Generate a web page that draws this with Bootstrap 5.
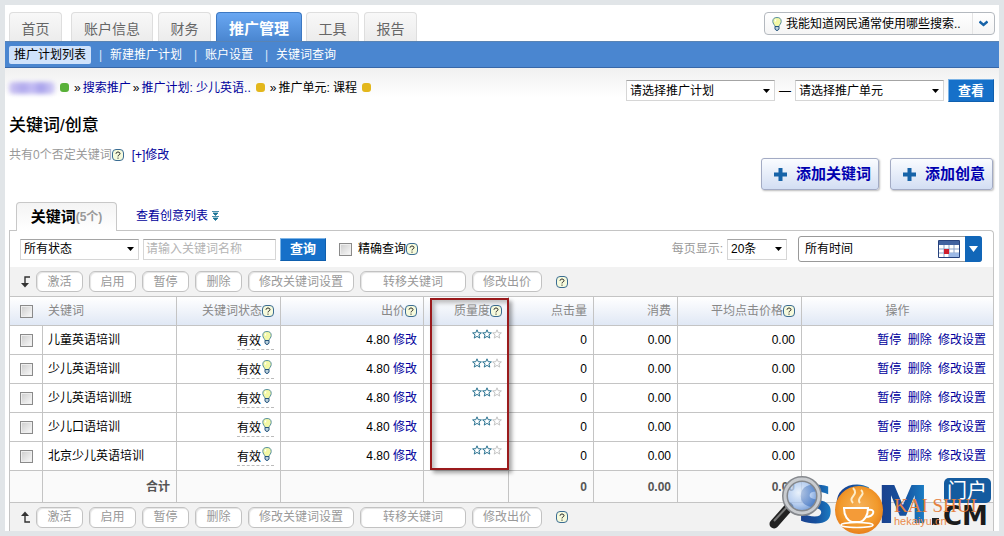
<!DOCTYPE html>
<html lang="zh-CN">
<head>
<meta charset="utf-8">
<meta name="viewport" content="width=device-width, initial-scale=1">
<title>关键词/创意 - 推广管理</title>
<link href="https://cdn.jsdelivr.net/npm/bootstrap@5.3.0/dist/css/bootstrap.min.css" rel="stylesheet">
<style>
  body { background: #e1e5e8; padding: 5px; font: 12px/18px "Liberation Sans", "Noto Sans CJK SC", sans-serif; color: #000; }
  a { color: #00009c; text-decoration: none; }
  svg { display: block; flex: none; }
  .page-shell { background: #fff; position: relative; }

  .main-tabs { height: 36px; padding: 0 4px; }
  .main-tabs .tab-link { height: 29px; width: 53px; margin-right: 5px; border: 1px solid #dedede; border-bottom: 0; border-radius: 4px 4px 0 0; background: linear-gradient(#f8f8f8, #ececec); color: #666; font-size: 14px; display: flex; align-items: center; justify-content: center; padding-top: 3px; }
  .main-tabs .tab-link.first { margin-right: 9px; }
  .main-tabs .tab-link.wide { width: 82px; }
  .main-tabs .tab-link.active { width: 86px; margin-right: 4px; background: linear-gradient(#69a7f2, #4a86d0); border-color: #3c78c2; color: #fff; font-weight: bold; font-size: 15px; }
  .tip-box { height: 23px; width: 231px; margin-bottom: 6px; border: 1px solid #b4b9bf; border-radius: 4px; background: linear-gradient(#fff, #f5f5f5); color: #000; padding: 0 0 0 7px; }
  .tip-box .tip-arrow { width: 22px; height: 21px; border-left: 1px solid #e4e4e4; }

  .sub-nav { height: 27px; background: #4a86d0; border-top: 1px solid #5a84b4; border-bottom: 1px solid #3767a8; padding: 0 4px; }
  .sub-nav a { color: #fff; }
  .sub-nav .current { background: #cfe2fb; color: #000; border-radius: 2px; padding: 0 5px; }
  .sub-nav .bar { color: #dbe8f8; width: 19px; text-align: center; }

  .crumb-row { background: linear-gradient(#f0f0f0, #fff 30px); min-height: 46px; padding: 11px 5px 0 4px; }
  .crumbs { gap: 2px; }
  .masked { width: 46px; height: 12px; border-radius: 4px; background: linear-gradient(90deg, #c4baf0, #9f96ea 30%, #b7aef2 50%, #948ce8 70%, #cfc8f5); filter: blur(2px); opacity: .8; }
  .dot { width: 9px; height: 9px; border-radius: 3px; background: #e3b71c; margin: 0 3px 2px; }
  .dot.green { background: #58b038; }

  .pick { height: 21px; border: 1px solid #d6d6d6; border-top-color: #a4a4a4; border-radius: 0; color: #000; appearance: none; font-size: 12px; line-height: 18px; padding: 0 16px 0 3px; background: #fff url("data:image/svg+xml,%3Csvg xmlns='http://www.w3.org/2000/svg' width='7' height='4'%3E%3Cpath d='M0 0h7L3.5 4z'/%3E%3C/svg%3E") no-repeat right 4px center; }
  .pick-plan { width: 149px; }
  .pick-state { width: 119px; }
  .pick-count { width: 60px; }
  .blue-btn { height: 23px; width: 46px; border: 1px solid #0f5fae; border-top-color: #7db4e6; border-left-color: #7db4e6; border-radius: 0; background: #1670c9; color: #fff; font-size: 13px; font-weight: bold; line-height: 18px; padding: 0; }

  .page-title { font-size: 17px; line-height: 24px; font-weight: 500; margin: 0; padding-left: 4px; }
  .muted-text { color: #999; }
  .add-row { padding: 12px 6px 0 0; gap: 11px; }
  .add-btn { height: 32px; border: 1px solid #a3abc4; border-radius: 3px; background: linear-gradient(#fafcff, #d3def3); color: #0000b0; font-size: 15px; font-weight: bold; line-height: 20px; padding: 0 7px 0 11px; box-shadow: 1px 1px 2px #bbb; gap: 8px; }

  .list-tabs { padding: 12px 0 0 11px; gap: 19px; }
  .list-tab { width: 101px; height: 29px; border: 1px solid #c8c8c8; border-bottom: 0; border-radius: 4px 4px 0 0; background: linear-gradient(#f4f4f4, #fff); font-size: 15px; font-weight: bold; margin-bottom: -1px; position: relative; z-index: 1; color: #000; }
  .list-tab small { font-size: 12px; color: #999; }
  .panel { border: 1px solid #c4c4c4; border-bottom: 0; border-radius: 0 4px 0 0; margin: 0 5px 0 4px; position: relative; }
  .filter-bar { height: 36px; padding: 0 11px 0 10px; }
  .name-box { width: 133px; height: 21px; border: 1px solid #d6d6d6; border-top-color: #a4a4a4; padding: 0 2px; border-radius: 0; }
  .name-box::placeholder { color: #b4b4b4; opacity: 1; }
  .tick { appearance: none; width: 13px; height: 13px; margin: 0; border: 1px solid #8a8a8a; background: linear-gradient(135deg, #ccc, #fafafa); box-shadow: inset 0 0 0 1px #eee; display: block; flex: none; }
  .exact { margin: 0 6px 0 13px; }
  .date-box { width: 184px; height: 26px; border: 1px solid #999; border-radius: 3px; background: #fff; padding: 0 0 0 6px; color: #000; margin-left: 11px; }
  .date-box .drop { width: 17px; height: 26px; background: #1166b8; border-radius: 0 3px 3px 0; margin: -1px -1px -1px 5px; }

  .action-bar { background: #f2f2f2; height: 28px; padding: 0 11px; gap: 6px; color: #999; }
  .action-bar.top { height: 30px; border-bottom: 1px solid #c4c4c4; }
  .act { height: 21px; width: 47px; border: 1px solid #c2c2c2; border-radius: 6px; background: #fff; color: #999; padding: 0; line-height: 18px; box-shadow: inset 1px 1px 1px #e4e4e4; }
  .act.mid { width: 70px; }
  .act.long { width: 106px; }

  .kw-table { table-layout: fixed; width: 100%; border-collapse: separate; border-spacing: 0; }
  .kw-table th, .kw-table td { height: 29px; padding: 0 6px; border-right: 1px solid #c4c4c4; border-bottom: 1px solid #c4c4c4; text-align: right; vertical-align: middle; line-height: 18px; white-space: nowrap; }
  .kw-table th:last-child, .kw-table td:last-child { border-right: 0; }
  .kw-table thead th { background: linear-gradient(#fff, #f3f6fb 40%, #e0e8f5); color: #888; font-weight: normal; }
  .kw-table thead th:first-child { border-right: 0; }
  .kw-table .c-name { text-align: left; padding-left: 5px; }
  .kw-table tbody th { font-weight: normal; }
  .kw-table .c-tick { padding-left: 10px; }
  .kw-table tbody .c-star { vertical-align: top; padding-top: 3px; }
  .kw-table tfoot th, .kw-table tfoot td { height: 32px; background: #fafafa; color: #555; font-weight: bold; }
  .kw-table .c-ops a { margin-left: 3px; }
  .kw-table .c-ops { padding-right: 7px; }
  .w-tick { width: 33px; } .w-name { width: 134px; } .w-state { width: 104px; } .w-price { width: 143px; } .w-num { width: 85px; } .w-cost { width: 84px; } .w-avg { width: 124px; }
  .state { display: inline-flex; border-bottom: 1px dashed #bbb; line-height: 16px; padding-right: 1px; }
  .state span { padding-top: 2px; }
  .callout-frame { position: absolute; left: 6px; right: -1px; top: 1px; height: 172px; border: 2px solid #9a1a1c; box-shadow: 3px 3px 4px rgba(0,0,0,.35), inset 3px 3px 4px rgba(0,0,0,.25); pointer-events: none; z-index: 2; }
  .watermark { position: absolute; right: 5px; bottom: -3px; pointer-events: none; z-index: 3; }
</style>
</head>
<body>
<svg width="0" height="0" class="position-absolute" aria-hidden="true">
  <defs>
    <symbol id="i-help" viewBox="0 0 12 12"><rect x=".5" y=".5" width="11" height="11" rx="3.500" fill="#f6fadc" stroke="#3a6c92"/><path d="M4 4.700C4 2.500 8 2.500 8 4.600 8 6 6 5.800 6 7.400M6 8.600v1.100" fill="none" stroke="#222"/></symbol>
    <symbol id="i-bulb" viewBox="0 0 10 14"><path d="M3 9.500C2.800 7.600.8 6.900.8 4.400a4.200 3.900 0 0 1 8.400 0C9.200 6.900 7.200 7.600 7 9.500z" fill="#f3f8a6" stroke="#57909c"/><path d="M3 9.500h4v2.500L6 13.300H4L3 12z" fill="#bcd3de" stroke="#24537c"/><path d="M3 4.500l1-2" stroke="#fff" stroke-width="1.300"/></symbol>
    <symbol id="i-star" viewBox="0 0 10 10"><path d="M5 .8l1.200 2.900 3.200.2-2.500 2 .9 3.200L5 7.400 2.200 9.100l.9-3.200-2.500-2 3.200-.2z" fill="#fff" stroke="currentColor"/></symbol>
    <symbol id="i-plus" viewBox="0 0 15 15"><path d="M5.500 1h4v4.500H14v4H9.500V14h-4V9.500H1v-4h4.500z" fill="#1763a8"/></symbol>
    <symbol id="i-stars" viewBox="0 0 30 10"><use href="#i-star" width="10" height="10" color="#2b7391"/><use href="#i-star" x="10" width="10" height="10" color="#2b7391"/><use href="#i-star" x="20" width="10" height="10" color="#c4c4c4"/></symbol>
  </defs>
</svg>

<div class="page-shell">
  <header>
    <div class="main-tabs d-flex align-items-end">
      <nav class="d-flex align-items-end" aria-label="主导航">
        <a class="tab-link first" href="#">首页</a>
        <a class="tab-link wide" href="#">账户信息</a>
        <a class="tab-link" href="#">财务</a>
        <a class="tab-link active" href="#">推广管理</a>
        <a class="tab-link" href="#">工具</a>
        <a class="tab-link" href="#">报告</a>
      </nav>
      <button type="button" class="tip-box ms-auto d-flex align-items-center">
        <svg width="10" height="14"><use href="#i-bulb"/></svg>
        <span class="ms-1 flex-grow-1 text-start">我能知道网民通常使用哪些搜索..</span>
        <span class="tip-arrow d-flex align-items-center justify-content-center"><svg width="9" height="7" viewBox="0 0 9 7"><path d="M.5 1.500l4 3.500 4-3.500" fill="none" stroke="#1763a8" stroke-width="2.400"/></svg></span>
      </button>
    </div>
    <nav class="sub-nav d-flex align-items-center" aria-label="推广管理">
      <a class="current" href="#">推广计划列表</a><span class="bar">|</span>
      <a href="#">新建推广计划</a><span class="bar ms-1">|</span>
      <a href="#">账户设置</a><span class="bar ms-1">|</span>
      <a href="#">关键词查询</a>
    </nav>
  </header>

  <div class="crumb-row d-flex align-items-start">
    <nav class="crumbs d-flex align-items-center" aria-label="当前位置">
      <span class="masked"></span><span class="dot green"></span>
      <span>»</span><a href="#">搜索推广</a>
      <span>»</span><a href="#">推广计划: 少儿英语..</a><span class="dot"></span>
      <span>»</span><span>推广单元: 课程</span><span class="dot"></span>
    </nav>
    <form class="ms-auto d-flex align-items-center">
      <select class="pick pick-plan" aria-label="推广计划"><option>请选择推广计划</option></select>
      <span class="mx-1">—</span>
      <select class="pick pick-plan" aria-label="推广单元"><option>请选择推广单元</option></select>
      <button type="button" class="blue-btn ms-1">查看</button>
    </form>
  </div>

  <h1 class="page-title">关键词/创意</h1>
  <div class="d-flex ps-1 pt-2">
    <div class="d-flex align-items-center align-self-start"><span class="muted-text">共有0个否定关键词</span><svg width="12" height="12"><use href="#i-help"/></svg><a class="ms-1 ps-1" href="#">[+]修改</a></div>
    <div class="add-row ms-auto d-flex">
      <button type="button" class="add-btn d-flex align-items-center"><svg width="15" height="15"><use href="#i-plus"/></svg>添加关键词</button>
      <button type="button" class="add-btn d-flex align-items-center"><svg width="15" height="15"><use href="#i-plus"/></svg>添加创意</button>
    </div>
  </div>

  <div class="list-tabs d-flex align-items-center">
    <a class="list-tab d-flex align-items-center justify-content-center" href="#">关键词<small>(5个)</small></a>
    <a class="d-flex align-items-center" href="#">查看创意列表<svg class="ms-1" width="7" height="10" viewBox="0 0 7 10"><path d="M0 .5h7M1 2h5L3.500 4.500zM0 5.500h7M1 7h5L3.500 9.500z" stroke="#1b7396" fill="#1b7396" stroke-width=".8"/></svg></a>
  </div>

  <main class="panel">
    <form class="filter-bar d-flex align-items-center">
      <select class="pick pick-state" aria-label="状态"><option>所有状态</option></select>
      <input class="name-box ms-1" type="text" placeholder="请输入关键词名称" aria-label="关键词名称">
      <button type="button" class="blue-btn ms-1">查询</button>
      <input class="tick exact" type="checkbox" id="exact"><label for="exact">精确查询</label><svg width="12" height="12"><use href="#i-help"/></svg>
      <label class="ms-auto me-1 muted-text" for="per-page">每页显示:</label>
      <select class="pick pick-count" id="per-page"><option>20条</option></select>
      <button type="button" class="date-box d-flex align-items-center">
        <span class="flex-grow-1 text-start">所有时间</span>
        <svg width="22" height="18" viewBox="0 0 22 18"><path d="M.5.500h21v17H.5z" fill="#fff" stroke="#26417c"/><path d="M1 1h20v4H1z" fill="#41629f"/><path d="M1 9h20M1 13h20M6 5v12M11 5v12M16 5v12" stroke="#8da4ca"/><path d="M16 13h5v4h-5zM11 13h5v4h-5z" fill="#9db9e6"/><path d="M6 9h5v5H6z" fill="#cf1e2c"/></svg>
        <span class="drop d-flex align-items-center justify-content-center"><svg width="9" height="6" viewBox="0 0 9 6"><path d="M0 0h9L4.500 6z" fill="#fff"/></svg></span>
      </button>
    </form>

    <div class="action-bar top d-flex align-items-center">
      <svg width="9" height="12" viewBox="0 0 9 12"><path d="M9 1H4v8" fill="none" stroke="#333" stroke-width="1.400"/><path d="M0 7h8l-4 4.500z" fill="#333"/></svg>
      <button type="button" class="act">激活</button><button type="button" class="act">启用</button><button type="button" class="act">暂停</button><button type="button" class="act">删除</button><button type="button" class="act long">修改关键词设置</button><button type="button" class="act long">转移关键词</button><button type="button" class="act mid">修改出价</button>
      <svg class="ms-2" width="12" height="12"><use href="#i-help"/></svg>
    </div>

    <table class="kw-table">
      <colgroup><col class="w-tick"><col class="w-name"><col class="w-state"><col class="w-price"><col class="w-num"><col class="w-num"><col class="w-cost"><col class="w-avg"><col></colgroup>
      <thead>
        <tr>
          <th class="c-tick"><input class="tick" type="checkbox" aria-label="全选"></th>
          <th class="c-name">关键词</th>
          <th><span class="d-flex align-items-center justify-content-end">关键词状态<svg width="12" height="12"><use href="#i-help"/></svg></span></th>
          <th><span class="d-flex align-items-center justify-content-end">出价<svg width="12" height="12"><use href="#i-help"/></svg></span></th>
          <th class="position-relative"><span class="d-flex align-items-center justify-content-end">质量度<svg width="12" height="12"><use href="#i-help"/></svg></span><span class="callout-frame"></span></th>
          <th>点击量</th>
          <th>消费</th>
          <th><span class="d-flex align-items-center justify-content-end">平均点击价格<svg width="12" height="12"><use href="#i-help"/></svg></span></th>
          <th class="text-center">操作</th>
        </tr>
      </thead>
      <tbody>
        <tr>
          <td class="c-tick"><input class="tick" type="checkbox" aria-label="儿童英语培训"></td><th class="c-name" scope="row">儿童英语培训</th>
          <td><span class="state"><span>有效</span><svg width="12" height="14"><use href="#i-bulb"/></svg></span></td>
          <td>4.80 <a href="#">修改</a></td><td class="c-star"><svg class="ms-auto" width="30" height="10"><use href="#i-stars"/></svg></td>
          <td>0</td><td>0.00</td><td>0.00</td><td class="c-ops"><a href="#">暂停</a> <a href="#">删除</a> <a href="#">修改设置</a></td>
        </tr>
        <tr>
          <td class="c-tick"><input class="tick" type="checkbox" aria-label="少儿英语培训"></td><th class="c-name" scope="row">少儿英语培训</th>
          <td><span class="state"><span>有效</span><svg width="12" height="14"><use href="#i-bulb"/></svg></span></td>
          <td>4.80 <a href="#">修改</a></td><td class="c-star"><svg class="ms-auto" width="30" height="10"><use href="#i-stars"/></svg></td>
          <td>0</td><td>0.00</td><td>0.00</td><td class="c-ops"><a href="#">暂停</a> <a href="#">删除</a> <a href="#">修改设置</a></td>
        </tr>
        <tr>
          <td class="c-tick"><input class="tick" type="checkbox" aria-label="少儿英语培训班"></td><th class="c-name" scope="row">少儿英语培训班</th>
          <td><span class="state"><span>有效</span><svg width="12" height="14"><use href="#i-bulb"/></svg></span></td>
          <td>4.80 <a href="#">修改</a></td><td class="c-star"><svg class="ms-auto" width="30" height="10"><use href="#i-stars"/></svg></td>
          <td>0</td><td>0.00</td><td>0.00</td><td class="c-ops"><a href="#">暂停</a> <a href="#">删除</a> <a href="#">修改设置</a></td>
        </tr>
        <tr>
          <td class="c-tick"><input class="tick" type="checkbox" aria-label="少儿口语培训"></td><th class="c-name" scope="row">少儿口语培训</th>
          <td><span class="state"><span>有效</span><svg width="12" height="14"><use href="#i-bulb"/></svg></span></td>
          <td>4.80 <a href="#">修改</a></td><td class="c-star"><svg class="ms-auto" width="30" height="10"><use href="#i-stars"/></svg></td>
          <td>0</td><td>0.00</td><td>0.00</td><td class="c-ops"><a href="#">暂停</a> <a href="#">删除</a> <a href="#">修改设置</a></td>
        </tr>
        <tr>
          <td class="c-tick"><input class="tick" type="checkbox" aria-label="北京少儿英语培训"></td><th class="c-name" scope="row">北京少儿英语培训</th>
          <td><span class="state"><span>有效</span><svg width="12" height="14"><use href="#i-bulb"/></svg></span></td>
          <td>4.80 <a href="#">修改</a></td><td class="c-star"><svg class="ms-auto" width="30" height="10"><use href="#i-stars"/></svg></td>
          <td>0</td><td>0.00</td><td>0.00</td><td class="c-ops"><a href="#">暂停</a> <a href="#">删除</a> <a href="#">修改设置</a></td>
        </tr>
      </tbody>
      <tfoot>
        <tr><td></td><th scope="row">合计</th><td></td><td></td><td></td><td>0</td><td>0.00</td><td>0.00</td><td></td></tr>
      </tfoot>
    </table>

    <div class="action-bar d-flex align-items-center">
      <svg width="9" height="12" viewBox="0 0 9 12"><path d="M9 11H4V3" fill="none" stroke="#333" stroke-width="1.400"/><path d="M0 5h8L4 .5z" fill="#333"/></svg>
      <button type="button" class="act">激活</button><button type="button" class="act">启用</button><button type="button" class="act">暂停</button><button type="button" class="act">删除</button><button type="button" class="act long">修改关键词设置</button><button type="button" class="act long">转移关键词</button><button type="button" class="act mid">修改出价</button>
      <svg class="ms-2" width="12" height="12"><use href="#i-help"/></svg>
    </div>
  </main>

  <svg class="watermark" width="226" height="62" viewBox="0 0 226 62" role="img" aria-label="SCM.CM 门户">
    <defs>
      <linearGradient id="g-blue" x1="0" y1="0" x2="1" y2="0"><stop offset="0" stop-color="#1c3f8c"/><stop offset=".5" stop-color="#164f9c"/><stop offset="1" stop-color="#1c86cc"/></linearGradient>
      <radialGradient id="g-orange" cx=".5" cy=".45" r=".55"><stop offset="0" stop-color="#f5b25c"/><stop offset=".7" stop-color="#f29a2c"/><stop offset="1" stop-color="#e8801c"/></radialGradient>
      <radialGradient id="g-lens" cx=".4" cy=".4" r=".6"><stop offset="0" stop-color="#e6f0fb"/><stop offset=".6" stop-color="#9dbdec" stop-opacity=".9"/><stop offset="1" stop-color="#4f83cf"/></radialGradient>
    </defs>
    <g font-family="DejaVu Sans, sans-serif" font-weight="bold" font-size="52" fill="url(#g-blue)"><text x="29" y="51">S</text><text x="66" y="51">C</text><text x="109" y="51">M</text></g>
    <path d="M21 35L6 52" stroke="#222" stroke-width="9" stroke-linecap="round"/><path d="M19 35L6 49" stroke="#777" stroke-width="2"/>
    <circle cx="34" cy="24" r="17" fill="url(#g-lens)" fill-opacity=".8" stroke="#85888d" stroke-width="6"/><circle cx="34" cy="24" r="17" fill="none" stroke="#c9ccd0" stroke-width="3"/>
    <rect x="176" y="6" width="47" height="25" rx="5" fill="#145b9f"/>
    <text x="179" y="26" font-family="Noto Sans CJK SC, sans-serif" font-size="20" fill="#fff">门户</text>
    <rect x="164" y="46" width="7" height="7" fill="#222"/>
    <text x="175" y="53" font-family="DejaVu Sans, sans-serif" font-weight="bold" font-size="26" fill="#1b1b1b">CM</text>
    <circle cx="91" cy="38" r="24" fill="url(#g-orange)"/>
    <path d="M76 36h24c0 8-4 13-8 14h-8c-4-1-8-6-8-14z" fill="#f49b38" stroke="#fff" stroke-width="2"/><path d="M100 38c8-2 7 7-3 7" fill="none" stroke="#fff" stroke-width="2"/><ellipse cx="89" cy="53" rx="16" ry="2.500" fill="none" stroke="#fff" stroke-width="1.500"/>
    <path d="M85 31c-6-6 7-8 0-15M92 31c-5-5 7-8 1-13" fill="none" stroke="#fdecc8" stroke-width="2"/>
    <text x="126" y="40" font-family="Liberation Serif, serif" font-size="19" fill="#e5813f">KAI SHUI</text>
    <text x="126" y="53" font-family="Liberation Sans, sans-serif" font-size="11" fill="#e98b4c">hekaiyu.cn</text>
  </svg>
</div>
<script src="https://cdn.jsdelivr.net/npm/bootstrap@5.3.0/dist/js/bootstrap.bundle.min.js"></script>
</body>
</html>
